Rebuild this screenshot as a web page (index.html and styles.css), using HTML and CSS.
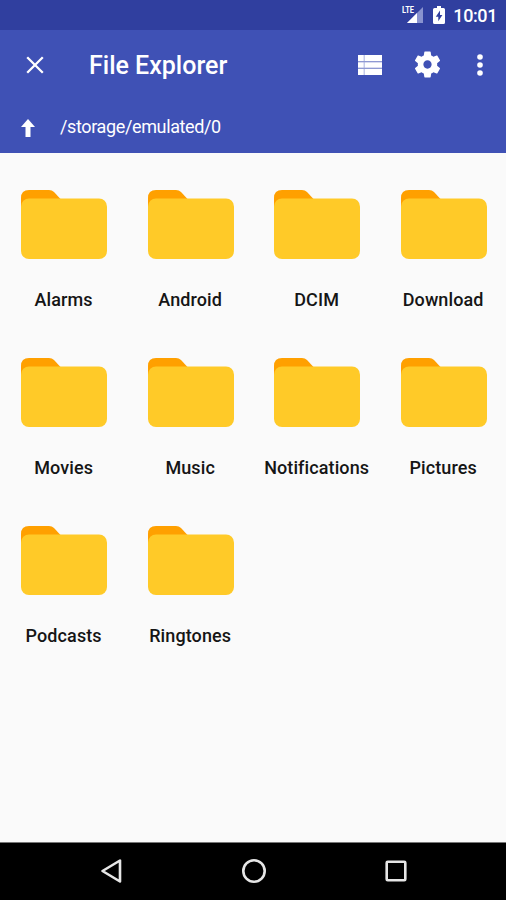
FILE: index.html
```html
<!DOCTYPE html>
<html lang="en">
<head>
<meta charset="utf-8">
<title>File Explorer</title>
<link rel="stylesheet" href="styles.css">
</head>
<body>
<svg class="defs" width="0" height="0">
  <symbol id="folder" viewBox="0 0 86 69">
    <path fill="#ffa000" d="M8 0H28Q31 0 33 2L39.500 9V30H0V8Q0 0 8 0Z"/>
    <rect fill="#ffca28" y="8.500" width="86" height="60.500" rx="8"/>
  </symbol>
</svg>
<div class="status">
  <svg class="signal" width="23" height="20" viewBox="0 0 23 20">
    <path fill="#8993cf" d="M21 2V18H5Z"/>
    <path fill="#fff" d="M15 8V18H5Z"/>
    <text class="lte" x="0" y="8" textLength="12" lengthAdjust="spacingAndGlyphs">LTE</text>
  </svg>
  <svg class="battery" width="12" height="18" viewBox="0 0 12 18">
    <path fill="#fff" d="M4 0H8V2H10.500Q12 2 12 3.500V16.500Q12 18 10.500 18H1.500Q0 18 0 16.500V3.500Q0 2 1.500 2H4Z"/>
    <path fill="#303f9f" d="M7 4.500L2.800 10.800H5.300V15.200L9.400 9H7Z"/>
  </svg>
  <span class="clock">10:01</span>
</div>
<header class="appbar">
  <div class="toolbar">
    <svg class="close" width="18" height="18" viewBox="0 0 18 18"><path d="M1.200 1.200L16.800 16.800M16.800 1.200L1.200 16.800" stroke="#fff" stroke-width="2.300"/></svg>
    <h1 class="title">File Explorer</h1>
    <svg class="list" width="24" height="20" viewBox="0 0 24 20"><path fill="#c5cbea" d="M0 0H24V20H0Z"/><path fill="#fff" d="M0 0H5.500V6H0ZM7 0H24V6H7ZM0 7.200H5.500V12.800H0ZM7 7.200H24V12.800H7ZM0 14H5.500V20H0ZM7 14H24V20H7Z"/><path fill="#8f99d3" d="M0 6H24V7.200H0ZM0 12.800H24V14H0Z"/></svg>
    <svg class="gear" width="31" height="31" viewBox="0 0 24 24"><path fill="#fff" d="M19.430 12.980c.04-.32.07-.64.07-.98s-.03-.66-.07-.98l2.110-1.650c.19-.15.24-.42.12-.64l-2-3.460c-.12-.22-.39-.3-.61-.22l-2.490 1c-.52-.4-1.080-.73-1.690-.98l-.38-2.650C14.460 2.180 14.250 2 14 2h-4c-.25 0-.46.18-.49.42l-.38 2.650c-.61.25-1.170.59-1.690.98l-2.490-1c-.23-.09-.49 0-.61.22l-2 3.460c-.13.22-.07.49.12.64l2.110 1.650c-.04.32-.07.65-.07.98s.03.66.07.98l-2.110 1.650c-.19.15-.24.42-.12.64l2 3.460c.12.22.39.3.61.22l2.490-1c.52.4 1.080.73 1.690.98l.38 2.650c.03.24.24.42.49.42h4c.25 0 .46-.18.49-.42l.38-2.650c.61-.25 1.170-.59 1.690-.98l2.490 1c.23.09.49 0 .61-.22l2-3.460c.12-.22.07-.49-.12-.64l-2.110-1.650zM12 15.200c-1.770 0-3.200-1.430-3.200-3.200s1.430-3.200 3.200-3.200 3.200 1.430 3.200 3.200-1.430 3.200-3.200 3.200z"/></svg>
    <svg class="more" width="6" height="22" viewBox="0 0 6 22" fill="#fff"><circle cx="3" cy="3" r="2.800"/><circle cx="3" cy="11" r="2.800"/><circle cx="3" cy="19" r="2.800"/></svg>
  </div>
  <div class="pathbar">
    <svg width="14" height="18" viewBox="0 0 14 18"><path fill="#fff" d="M7 0L14 8H9.500V18H4.500V8H0Z"/></svg>
    <span class="path">/storage/emulated/0</span>
  </div>
</header>
<main class="grid">
  <div class="item"><svg class="folder"><use href="#folder"/></svg><span>Alarms</span></div>
  <div class="item"><svg class="folder"><use href="#folder"/></svg><span>Android</span></div>
  <div class="item"><svg class="folder"><use href="#folder"/></svg><span>DCIM</span></div>
  <div class="item"><svg class="folder"><use href="#folder"/></svg><span>Download</span></div>
  <div class="item"><svg class="folder"><use href="#folder"/></svg><span>Movies</span></div>
  <div class="item"><svg class="folder"><use href="#folder"/></svg><span>Music</span></div>
  <div class="item"><svg class="folder"><use href="#folder"/></svg><span>Notifications</span></div>
  <div class="item"><svg class="folder"><use href="#folder"/></svg><span>Pictures</span></div>
  <div class="item"><svg class="folder"><use href="#folder"/></svg><span>Podcasts</span></div>
  <div class="item"><svg class="folder"><use href="#folder"/></svg><span>Ringtones</span></div>
</main>
<nav class="navbar">
  <svg width="22" height="26" viewBox="0 0 22 26"><path d="M20 2.500V23.500L2.500 13Z"/></svg>
  <svg width="26" height="26" viewBox="0 0 26 26"><circle cx="13" cy="13" r="10.700"/></svg>
  <svg width="22" height="22" viewBox="0 0 22 22"><rect x="1.700" y="1.700" width="18.600" height="18.600" rx="1"/></svg>
</nav>
</body>
</html>
```
FILE: styles.css
```css
* { box-sizing: border-box; }
body {
  margin: 0;
  height: 900px;
  display: flex;
  flex-direction: column;
  overflow: hidden;
  background: #fafafa;
  font-family: Roboto, sans-serif;
  color: #fff;
}
svg { display: block; flex: none; }
.defs { height: 0; }
.status {
  height: 30px;
  display: flex;
  align-items: center;
  justify-content: flex-end;
  padding-right: 9px;
  background: #303f9f;
}
.signal { margin-right: 8px; }
.lte { font-size: 9px; font-weight: 700; fill: #fff; }
.battery { margin-right: 8px; }
.clock {
  font-size: 18px;
  font-weight: 500;
  line-height: 30px;
  letter-spacing: -0.400px;
  padding-top: 2px;
}
.appbar {
  height: 123px;
  background: #3f51b5;
}
.toolbar {
  height: 69px;
  display: flex;
  align-items: center;
  padding: 0 23.500px 0 26px;
}
.title {
  margin: 2px auto 0 45px;
  font-size: 25px;
  line-height: 30px;
  font-weight: 500;
}
.gear { margin: 0 34px 0 30px; }
.pathbar {
  height: 54px;
  display: flex;
  align-items: center;
  padding: 3px 0 0 21px;
}
.pathbar svg { margin-top: 1px; }
.path {
  margin: 0 0 1px 25px;
  font-size: 18px;
  line-height: 22px;
  letter-spacing: -0.370px;
}
.grid {
  height: 689px;
  padding-top: 37px;
  display: grid;
  grid-template-columns: repeat(4, 1fr);
  grid-auto-rows: 168px;
  align-content: start;
}
.item {
  display: flex;
  flex-direction: column;
  align-items: center;
  color: #151515;
  font-size: 18px;
  font-weight: 500;
  line-height: 22px;
  letter-spacing: 0.100px;
}
.item span { margin-left: 0.800px; }
.folder {
  width: 86px;
  height: 69px;
  margin: 0 0 30px 1.500px;
}
.navbar {
  height: 58px;
  display: flex;
  align-items: center;
  justify-content: space-between;
  padding: 0 99px 1px 100px;
  background: #000;
  border-top: 1px solid #777;
  fill: none;
  stroke: #e6e6e6;
  stroke-width: 2.600;
  stroke-linejoin: round;
}
```
